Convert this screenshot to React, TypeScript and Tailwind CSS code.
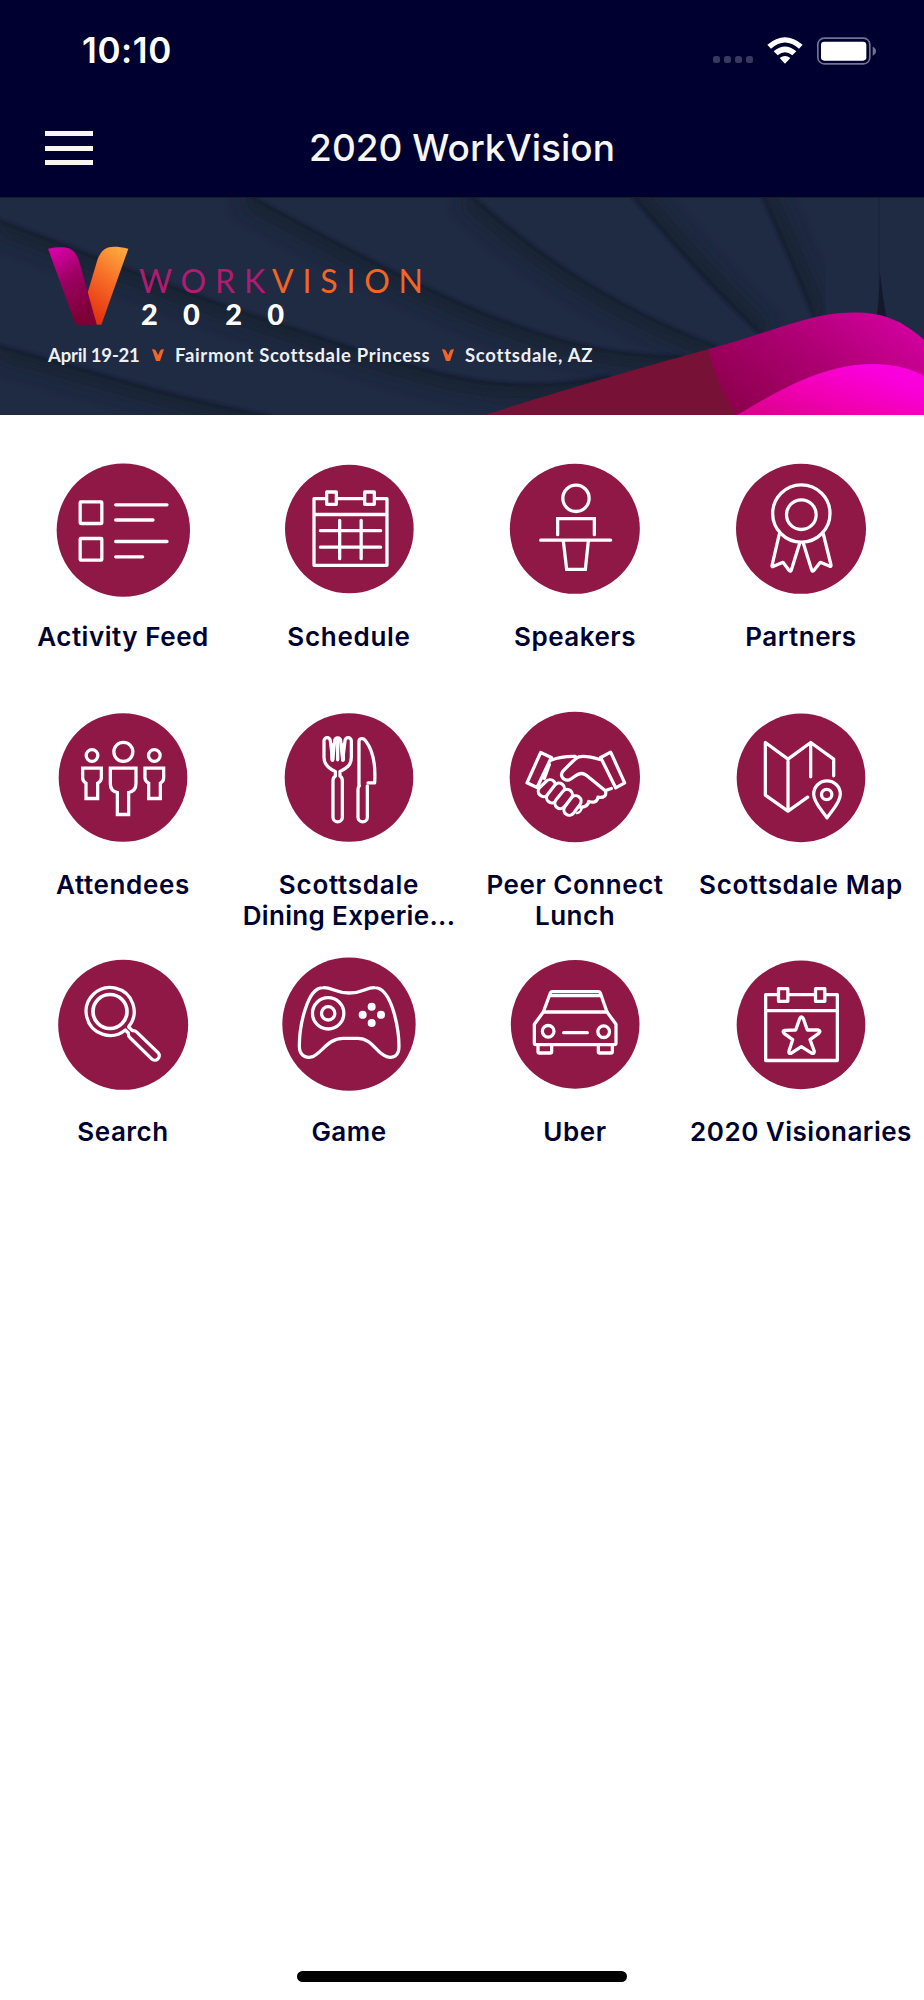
import type { ReactNode } from 'react'

type Tile = {
  label: ReactNode
  name: string
  viewBox: string
  circle: [number, number, number]
  art: ReactNode
}

const MAROON = '#8f1846'

const tiles: Tile[] = [
  {
    name: 'activity-feed',
    label: <span className="tracking-[0.53px]">Activity Feed</span>,
    viewBox: '153 21 432 432',
    circle: [370, 240.5, 200],
    art: (
      <>
        <rect x="240.500" y="155.500" width="65" height="65" rx="2" />
        <rect x="240.500" y="265.500" width="65" height="65" rx="2" />
        <path d="M347 164.500H501M347 210H459M347 274.500H501M347 320.500H428" />
      </>
    ),
  },
  {
    name: 'schedule',
    label: <span className="tracking-[0.7px]">Schedule</span>,
    viewBox: '831 21 432 432',
    circle: [1048, 237, 193],
    art: (
      <>
        <path d="M976 146H942V346H1161V146H1127M1013 146H1090M942 193.500H1161" />
        <rect x="980" y="126" width="29" height="37" />
        <rect x="1094" y="126" width="29" height="37" />
        <path d="M961 242H1142M961 291.500H1142M1019 211V326M1083.500 211V326" />
      </>
    ),
  },
  {
    name: 'speakers',
    label: <span className="tracking-[0.5px]">Speakers</span>,
    viewBox: '123 21 432 432',
    circle: [338.5, 236.5, 195],
    art: (
      <>
        <circle cx="342" cy="145" r="39.500" />
        <path d="M287 254V206H397V254M236 270.500H446" strokeLinejoin="miter" />
        <path d="M304 273L314 358H370L379 273" strokeLinejoin="miter" />
      </>
    ),
  },
  {
    name: 'partners',
    label: <span className="tracking-[0.5px]">Partners</span>,
    viewBox: '801 21 432 432',
    circle: [1017, 236.5, 195],
    art: (
      <>
        <circle cx="1018" cy="190.500" r="86" />
        <circle cx="1018" cy="194" r="44.500" />
        <path d="M952 252L930 347Q929 352 935 349L963 337L982 362Q986 366 988 360L1013 280" />
        <path d="M1084 252L1107 345Q1108 351 1102 348L1075 337L1055 362Q1051 366 1049 360L1024 280" />
      </>
    ),
  },
  {
    name: 'attendees',
    label: <span className="tracking-[0.65px]">Attendees</span>,
    viewBox: '153 13.5 432 432',
    circle: [369, 231, 193],
    art: (
      <g strokeLinejoin="miter">
        <circle cx="276" cy="165" r="17.500" />
        <circle cx="463" cy="165" r="17.500" />
        <circle cx="370" cy="154" r="28.500" />
        <path d="M248 203H304V232Q304 243 293 248V294H258V248Q248 243 248 232Z" />
        <path d="M435 203H491V232Q491 243 481 248V294H446V248Q435 243 435 232Z" />
        <path d="M331 203H408V250Q408 272 386 276V342H352V276Q331 272 331 250Z" />
      </g>
    ),
  },
  {
    name: 'dining',
    label: (
      <>
        <span className="tracking-[0.75px]">Scottsdale</span>
        <br />
        <span className="tracking-[0.35px]">Dining Experie...</span>
      </>
    ),
    viewBox: '831 13.5 432 432',
    circle: [1047, 231, 193],
    art: (
      <>
        <path d="M972 121a9.500 9.500 0 0 1 19 0L998 179L1004 121a9 9 0 0 1 18 0L1028 179L1035 121a9.500 9.500 0 0 1 19 0V170C1054 194 1040 204 1020 213V227Q1027 231 1027 240V350a14 14 0 0 1-28 0V240Q999 231 1006 227V213C987 205 972 194 972 170Z" />
        <path d="M997 134V178M1029 134V178" strokeWidth="12" />
        <path d="M1013 120V178" />
        <path d="M1077 254V122C1077 113 1090 112 1096 120C1120 150 1127 200 1124 247H1104" />
        <path d="M1078 256Q1074 260 1074 268V350a14 14 0 0 0 28 0V256" />
      </>
    ),
  },
  {
    name: 'peer-connect',
    label: (
      <>
        <span className="tracking-[0.53px]">Peer Connect</span>
        <br />
        <span className="tracking-[0.5px]">Lunch</span>
      </>
    ),
    viewBox: '123 13.5 432 432',
    circle: [338.5, 229.5, 195.5],
    art: (
      <>
        <path d="M236 156L268 171L225 261L195 247Z" />
        <path d="M446 155L488 247L461 262L416 171Z" />
        <path d="M266 179Q300 167 340 168M262 192L247 234M448 264L431 270" />
        <path d="M414 177C390 170 365 166 351 169C340 173 335 180 303 212C292 225 304 242 321 238C334 234 342 219 359 219C370 219 377 228 385 234L430 271C435 286 425 293 408 290C406 304 394 308 380 303C378 317 365 322 351 319" />
        {/* knuckles, each one a capsule overlapping the next */}
        {[
          [245, 272, 264, 254],
          [270, 291, 291, 264],
          [295, 308, 315, 283],
          [322, 328, 341, 302],
        ].map(([x1, y1, x2, y2]) => (
          <g key={x1}>
            <line x1={x1} y1={y1} x2={x2} y2={y2} strokeWidth="42" />
            <line x1={x1} y1={y1} x2={x2} y2={y2} strokeWidth="23" stroke={MAROON} />
          </g>
        ))}
        <path d="M345 338Q357 335 360 320" strokeWidth="7" />
      </>
    ),
  },
  {
    name: 'map',
    label: <span className="tracking-[0.66px]">Scottsdale Map</span>,
    viewBox: '801 13.5 432 432',
    circle: [1017, 232, 193],
    art: (
      <>
        <path d="M1037 290L978 332L910 284V126L978 176L1046 126L1115 176V226M978 176V332M1046 126V229" />
        <path d="M1095 352C1084 334 1055 307 1055 281A40 40 0 0 1 1135 281C1135 307 1106 334 1095 352Z" />
        <circle cx="1094" cy="282" r="15.500" />
      </>
    ),
  },
  {
    name: 'search',
    label: <span className="tracking-[0.5px]">Search</span>,
    viewBox: '153 21 432 432',
    circle: [369.5, 239.5, 195],
    art: (
      <>
        <circle cx="330" cy="199.500" r="51" strokeWidth="11" />
        <path d="M386 245A72 72 0 1 0 376 255L385 264Q384 273 391 279L454 341C467 354 486 337 474 323L411 262Q405 256 397 257L386 246" />
      </>
    ),
  },
  {
    name: 'game',
    label: <span className="tracking-[0.5px]">Game</span>,
    viewBox: '831 21 432 432',
    circle: [1047, 237.5, 200],
    art: (
      <>
        <path d="M970 128C998 127 1003 144 1048 144C1093 144 1096 127 1124 128C1150 128 1168 158 1181 200C1191 235 1197 272 1197 304C1197 333 1180 341 1160 335C1128 325 1118 280 1073 280H1029C984 280 967 322 938 335C916 342 898 330 898 304C898 264 904 229 915 195C929 150 945 128 970 128Z" />
        <circle cx="984.500" cy="205" r="47" />
        <circle cx="984.500" cy="205" r="20" />
        <g fill="#fff" stroke="none">
          <circle cx="1115" cy="185.500" r="12" />
          <circle cx="1088" cy="209.500" r="12" />
          <circle cx="1143" cy="209.500" r="12" />
          <circle cx="1115" cy="234" r="12" />
        </g>
      </>
    ),
  },
  {
    name: 'uber',
    label: <span className="tracking-[0.6px]">Uber</span>,
    viewBox: '123 21 432 432',
    circle: [339.5, 238, 193],
    art: (
      <>
        <path d="M244 201L265 144Q267 140 271 140H409Q413 140 415 144L435 201L462 238V294Q462 299 457 299H222Q217 299 217 294V238Z" />
        <path d="M264 152H416M244 201H435M305 263H376" />
        <path d="M228 301V320Q228 324 232 324H265Q269 324 269 320V301M409 301V320Q409 324 413 324H447Q451 324 451 320V301" />
        <circle cx="258.500" cy="259" r="17.500" />
        <circle cx="425" cy="260" r="17.500" />
      </>
    ),
  },
  {
    name: 'visionaries',
    label: <span className="tracking-[0.5px]">2020 Visionaries</span>,
    viewBox: '801 21 432 432',
    circle: [1017, 239.5, 193],
    art: (
      <>
        <path d="M946 149H911V346.500H1126V149H1092M981 149H1057M911 197H1126" />
        <rect x="949.500" y="131" width="28" height="38" />
        <rect x="1060.500" y="131" width="28" height="38" />
        <path d="M1013 221Q1019 211 1024 221L1036 255L1069 255Q1078 258 1070 265L1044 284L1057 319Q1057 327 1050 325L1018 305L987 325Q979 327 981 318L992 284L966 265Q960 257 968 256L1001 255Z" />
      </>
    ),
  },
]

// Edges of the banner's paper folds; each is closed towards the side its shadow falls on
const folds = [
  { edge: 'M-10 465C250 530 500 620 810 676', close: 'V800H-10Z' },
  { edge: 'M-10 87C300 200 550 310 900 420C1050 470 1220 530 1386 562C1500 585 1650 595 1830 556', close: 'V800H-10Z' },
  { edge: 'M740 10C960 130 1180 250 1386 340C1600 430 1800 500 2050 497', close: 'V800H-10V10Z' },
  { edge: 'M1408 10C1600 180 1800 330 2150 468', close: 'V800H-10V10Z' },
  { edge: 'M1890 10C2010 150 2130 290 2285 435', close: 'H2800V10Z' },
  { edge: 'M2284 10C2340 140 2400 270 2445 390', close: 'H2800V10Z' },
]

const BannerArt = () => (
  <svg className="absolute inset-0 h-full w-full" viewBox="0 20 2772 654" preserveAspectRatio="none">
    <defs>
      <filter id="soft" x="-20%" y="-20%" width="140%" height="140%">
        <feGaussianBlur stdDeviation="26" />
      </filter>
      <filter id="softer" x="-20%" y="-20%" width="140%" height="140%">
        <feGaussianBlur stdDeviation="5" />
      </filter>
      <linearGradient id="band" x1="0" y1="0.8" x2="1" y2="0.2">
        <stop offset="0" stopColor="#8c004b" />
        <stop offset="0.5" stopColor="#ab0070" />
        <stop offset="1" stopColor="#d3009f" />
      </linearGradient>
      <linearGradient id="pink" x1="0" y1="0.8" x2="0.8" y2="0.2">
        <stop offset="0" stopColor="#dc0090" />
        <stop offset="0.5" stopColor="#f200b4" />
        <stop offset="1" stopColor="#fa00dd" />
      </linearGradient>
      <linearGradient id="legLeft" x1="0" y1="0" x2="0.45" y2="1">
        <stop offset="0.1" stopColor="#d400a2" />
        <stop offset="0.5" stopColor="#9c0063" />
        <stop offset="1" stopColor="#7d0037" />
      </linearGradient>
      <linearGradient id="legRight" x1="0.7" y1="0" x2="0.3" y2="1">
        <stop offset="0" stopColor="#fca63c" />
        <stop offset="0.45" stopColor="#f76a27" />
        <stop offset="1" stopColor="#e2300f" />
      </linearGradient>
      {folds.map((f, i) => (
        <clipPath key={i} id={`fold${i}`}>
          <path d={f.edge + f.close} />
        </clipPath>
      ))}
    </defs>
    <rect y="20" width="2772" height="656" fill="#1f2a43" />
    {folds.map((f, i) => (
      <g key={i} fill="none">
        <g clipPath={`url(#fold${i})`}>
          <path d={f.edge} stroke="#19232f" strokeWidth="90" opacity="0.75" filter="url(#soft)" />
        </g>
        <path d={f.edge} stroke="#11192a" strokeWidth="8" opacity="0.6" filter="url(#softer)" />
      </g>
    ))}
    <path d="M2636 20V400H2660Q2648 320 2640 250V20Z" fill="#151e30" opacity="0.4" />
    <path d="M2640 250Q2637 330 2628 400H2662Q2648 320 2640 250Z" fill="#121a2a" />
    <path d="M0 21H2772" stroke="#151c28" strokeWidth="3" />
    <path d="M1448 676C1700 595 1950 525 2124 477L2212 676Z" fill="#771135" />
    <path d="M2124 477C2250 443 2330 410 2446 380C2530 362 2610 362 2666 382C2706 396 2740 420 2772 448V676H2208C2175 620 2145 560 2124 477Z" fill="url(#band)" />
    <path d="M2208 676C2350 590 2480 521 2616 521C2690 521 2735 537 2772 557V676Z" fill="url(#pink)" />
    <path d="M385 175C325 163 309 170 293 206L262 310L290 403H304Z" fill="url(#legRight)" />
    <path d="M144 175C205 165 226 172 240 220L290 403H227Z" fill="url(#legLeft)" />
  </svg>
)

const SmallV = () => (
  <svg className="h-[12px] w-[12px]" viewBox="0 0 33 34" preserveAspectRatio="none" fill="#f26524">
    <path d="M0 1Q9 -1 11 5L17 18L22 5Q24 -1 33 1L22 34H11Z" />
  </svg>
)

export default function App() {
  return (
    <div className="flex h-[2000px] w-[924px] flex-col bg-white font-['Inter',sans-serif]">
      <header className="h-[197px] bg-[#000030] text-white">
        <div className="flex h-[101px] items-center justify-between pr-[48px] pl-[82px]">
          <span className="text-[35px] leading-none font-semibold tracking-[0.6px]">10:10</span>
          <div className="flex items-center">
            <div className="mt-[18px] mr-[14px] flex gap-[4px]">
              {[0, 1, 2, 3].map((i) => (
                <span key={i} className="size-[7px] rounded-[2.5px] bg-[#383860]" />
              ))}
            </div>
            <svg className="mr-[14px] h-[27px] w-[36px]" viewBox="0 0 108 81" fill="#fff">
              <path d="M1 23Q54 -22 107 23L96 35Q54 -2 12 35Z" />
              <path d="M20 43Q54 14 88 43L76 55Q54 37 32 55Z" />
              <path d="M38 63Q54 51 70 63L54 80Z" />
            </svg>
            <svg className="h-[28px] w-[59px]" viewBox="0 0 177 84" fill="none">
              <rect x="2.500" y="3.500" width="156" height="77" rx="19" stroke="#72728f" strokeWidth="5" />
              <rect x="12" y="14" width="136" height="57" rx="10" fill="#fff" />
              <path d="M167 29Q177 33 177 42T167 56Z" fill="#72728f" />
            </svg>
          </div>
        </div>
        <div className="relative flex h-[93px] items-center justify-center">
          <button aria-label="Menu" className="absolute left-[45px] flex flex-col gap-[9.500px] pt-[1px]">
            <span className="h-[5px] w-[48px] bg-[#f8f5f7]" />
            <span className="h-[5px] w-[48px] bg-[#f8f5f7]" />
            <span className="h-[5px] w-[48px] bg-[#f8f5f7]" />
          </button>
          <h1 className="text-[37px] leading-none font-medium text-[#f7f7f7]">2020 WorkVision</h1>
        </div>
      </header>

      <section className="relative h-[218px] overflow-hidden">
        <BannerArt />
        <div className="relative pt-[66px] pl-[139px] font-['Lato',sans-serif]">
          <div className="flex h-[36px] items-center text-[32px] leading-none whitespace-nowrap">
            <span className="w-[133px] tracking-[8.8px] text-[#b01c70]">WORK</span>
            <span className="tracking-[8.8px] text-[#f26524]">VISION</span>
          </div>
          <p className="pl-[2px] text-[29px] leading-[30px] font-black tracking-[25.3px] text-white">2020</p>
        </div>
        <div className="relative mt-[14px] flex h-[24px] items-center pl-[48px] font-['Lato',sans-serif] text-[18.500px] leading-none font-bold whitespace-nowrap text-[#eef0f4]">
          <span className="w-[104px] tracking-[-0.2px]">April 19-21</span>
          <SmallV />
          <span className="ml-[11px] w-[267px] tracking-[0.68px]">Fairmont Scottsdale Princess</span>
          <SmallV />
          <span className="ml-[11px] tracking-[0.74px]">Scottsdale, AZ</span>
        </div>
      </section>

      <main className="grid grid-cols-[226px_226px_226px_226px] justify-center pt-[42px]">
        {tiles.map((tile) => (
          <div key={tile.name} className="flex h-[247.500px] flex-col items-center">
            <svg
              className="size-[144px]"
              viewBox={tile.viewBox}
              fill="none"
              stroke="#fff"
              strokeWidth="9.800"
              strokeLinecap="round"
              strokeLinejoin="round"
            >
              <circle cx={tile.circle[0]} cy={tile.circle[1]} r={tile.circle[2]} fill={MAROON} stroke="none" />
              {tile.art}
            </svg>
            <p className="mt-[20px] text-center text-[26px] leading-[31px] font-semibold whitespace-nowrap text-[#000030]">
              {tile.label}
            </p>
          </div>
        ))}
      </main>

      <div className="mx-auto mt-auto mb-[18px] h-[11px] w-[330px] rounded-full bg-black" />
    </div>
  )
}
